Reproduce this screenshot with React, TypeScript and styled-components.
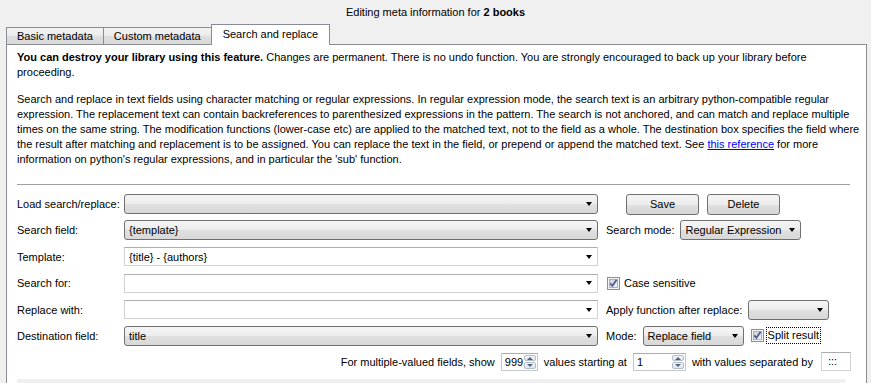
import styled, { createGlobalStyle } from "styled-components";

const GlobalStyle = createGlobalStyle`
    html, body {
        margin: 0;
        padding: 0;
        background: #f0f0f0;
        font-family: "Liberation Sans", Arial, sans-serif;
        font-size: 11px;
        color: #000;
        overflow: hidden;
    }
`;

const Window = styled.div`
    width: 871px;
    height: 383px;
    overflow: hidden;
`;

const Title = styled.div`
    height: 25px;
    line-height: 25px;
    text-align: center;
`;

const TabBar = styled.div`
    display: flex;
    align-items: flex-end;
    height: 19px;
    padding-left: 6px;
    position: relative;
    z-index: 1;
`;

const Tab = styled.div<{ $active?: boolean }>`
    box-sizing: border-box;
    border: 1px solid #898c95;
    border-bottom: none;
    height: ${(p) => (p.$active ? "21px" : "17px")};
    line-height: ${(p) => (p.$active ? "19px" : "16px")};
    margin-bottom: ${(p) => (p.$active ? "-1px" : "0")};
    padding: ${(p) => (p.$active ? "0 11px" : "0 10px")};
    background: ${(p) =>
        p.$active ? "#fff" : "linear-gradient(#f3f3f3, #ebebeb 50%, #dedede 51%, #d9d9d9)"};
    & + & {
        margin-left: ${(p) => (p.$active ? "-1px" : "0")};
    }
`;

const Pane = styled.div`
    margin: 0 4px 0 6px;
    border: 1px solid #898c95;
    background: #fff;
    padding: 5px 15px 0 10px;
    height: 400px;
`;

const Para = styled.p<{ $gap?: number }>`
    margin: 0 0 ${(p) => p.$gap ?? 0}px;
    line-height: 15px;
    white-space: nowrap;
`;

const Link = styled.a`
    color: #0000ff;
    text-decoration: underline;
`;

const Separator = styled.div`
    border-top: 1px solid #a0a0a0;
    margin: 17px 1px 9px 0;
`;

const Form = styled.div`
    display: flex;
    flex-direction: column;
    gap: 6.4px;
`;

const Row = styled.div`
    display: flex;
    align-items: center;
    height: 20px;
`;

const Label = styled.span`
    width: 107px;
    flex-shrink: 0;
`;

const Text = styled.span<{ $ml?: number }>`
    margin-left: ${(p) => p.$ml ?? 0}px;
    white-space: nowrap;
`;

const Combo = styled.div<{ $edit?: boolean; $width: number; $ml?: number }>`
    box-sizing: border-box;
    position: relative;
    width: ${(p) => p.$width}px;
    height: ${(p) => (p.$edit ? "19px" : "20px")};
    margin-left: ${(p) => p.$ml ?? 0}px;
    padding-left: 4px;
    display: flex;
    align-items: center;
    white-space: nowrap;
    border: 1px solid ${(p) => (p.$edit ? "#d0d2d8" : "#707070")};
    border-top-color: ${(p) => (p.$edit ? "#abadb3" : "#707070")};
    border-radius: ${(p) => (p.$edit ? "0" : "3px")};
    background: ${(p) =>
        p.$edit ? "#fff" : "linear-gradient(#f5f5f5, #ececec 50%, #e0e0e0 51%, #d8d8d8)"};
    flex-shrink: 0;

    &::after {
        content: "";
        position: absolute;
        right: 5px;
        top: 50%;
        margin-top: -2px;
        border-left: 3.5px solid transparent;
        border-right: 3.5px solid transparent;
        border-top: 4px solid #000;
    }
`;

const Button = styled.button<{ $ml?: number }>`
    box-sizing: border-box;
    width: 73px;
    height: 21px;
    margin-left: ${(p) => p.$ml ?? 0}px;
    border: 1px solid #707070;
    border-radius: 3px;
    background: linear-gradient(#f5f5f5, #ececec 50%, #e0e0e0 51%, #d6d6d6);
    font: inherit;
    color: #000;
    padding: 0;
`;

const CheckWrap = styled.span<{ $ml?: number }>`
    display: inline-flex;
    margin-left: ${(p) => p.$ml ?? 0}px;
    flex-shrink: 0;
`;

const FocusLabel = styled.span`
    margin-left: 2px;
    padding: 1px 1px 2px 1px;
    border: 1px dotted #000;
    white-space: nowrap;
`;

const BottomRow = styled.div`
    display: flex;
    align-items: center;
    justify-content: flex-end;
    height: 20px;
    gap: 6px;
    margin-top: 6px;
`;

const Spin = styled.div<{ $width: number }>`
    box-sizing: border-box;
    width: ${(p) => p.$width}px;
    height: 18px;
    border: 1px solid #c5c8ce;
    border-top-color: #abadb3;
    background: #fff;
    display: flex;
    align-items: stretch;
    padding: 1px;
`;

const SpinValue = styled.span`
    flex: 1;
    padding-left: 2px;
    line-height: 14px;
`;

const SpinButtons = styled.div`
    width: 12px;
    display: flex;
    flex-direction: column;
    gap: 1px;
`;

const SpinButton = styled.div<{ $up?: boolean }>`
    flex: 1;
    border: 1px solid #b4bcc8;
    border-radius: 2px;
    background: linear-gradient(#f4f6f9, #dfe5ec);
    display: flex;
    align-items: center;
    justify-content: center;

    &::before {
        content: "";
        border-left: 3px solid transparent;
        border-right: 3px solid transparent;
        ${(p) => (p.$up ? "border-bottom: 3px solid #4d6185;" : "border-top: 3px solid #4d6185;")}
    }
`;

const SepBox = styled.div`
    box-sizing: border-box;
    width: 30px;
    height: 19px;
    border: 1px solid #d0d2d8;
    border-top-color: #abadb3;
    background: #fff;
    padding-left: 6px;
    line-height: 17px;
    margin-left: 2px;
`;

const Preview = styled.div`
    height: 20px;
    background: #f0f0f0;
    margin: 7px 6px 0 0;
`;

function CheckBox({ ml }: { ml?: number }) {
    return (
        <CheckWrap $ml={ml}>
            <svg width="13" height="13" viewBox="0 0 13 13">
                <defs>
                    <linearGradient id="cbg" x1="0" y1="0" x2="1" y2="1">
                        <stop offset="0" stopColor="#cbcfd5" />
                        <stop offset="1" stopColor="#f6f6f6" />
                    </linearGradient>
                </defs>
                <rect x="0.5" y="0.5" width="12" height="12" fill="#f4f4f4" stroke="#8e8f8f" />
                <rect x="2.5" y="2.5" width="8" height="8" fill="url(#cbg)" stroke="#aeb3b9" />
                <path d="M3.2 6.4 L5.4 8.8 L9.6 2.8" fill="none" stroke="#4a5f97" strokeWidth="1.8" />
            </svg>
        </CheckWrap>
    );
}

function SpinBox({ value, width }: { value: string; width: number }) {
    return (
        <Spin $width={width}>
            <SpinValue>{value}</SpinValue>
            <SpinButtons>
                <SpinButton $up />
                <SpinButton />
            </SpinButtons>
        </Spin>
    );
}

export default function App() {
    return (
        <Window>
            <GlobalStyle />
            <Title>
                Editing meta information for <b>2 books</b>
            </Title>
            <TabBar>
                <Tab>Basic metadata</Tab>
                <Tab>Custom metadata</Tab>
                <Tab $active>Search and replace</Tab>
            </TabBar>
            <Pane>
                <Para $gap={12}>
                    <b>You can destroy your library using this feature.</b> Changes are permanent. There is no
                    undo function. You are strongly encouraged to back up your library before
                    <br />
                    proceeding.
                </Para>
                <Para>
                    Search and replace in text fields using character matching or regular expressions. In regular
                    expression mode, the search text is an arbitrary python-compatible regular
                    <br />
                    expression. The replacement text can contain backreferences to parenthesized expressions in the
                    pattern. The search is not anchored, and can match and replace multiple
                    <br />
                    times on the same string. The modification functions (lower-case etc) are applied to the matched
                    text, not to the field as a whole. The destination box specifies the field where
                    <br />
                    the result after matching and replacement is to be assigned. You can replace the text in the
                    field, or prepend or append the matched text. See <Link href="#">this reference</Link> for more
                    <br />
                    information on python's regular expressions, and in particular the 'sub' function.
                </Para>
                <Separator />
                <Form>
                    <Row>
                        <Label>Load search/replace:</Label>
                        <Combo $width={474} />
                        <Button $ml={28}>Save</Button>
                        <Button $ml={8}>Delete</Button>
                    </Row>
                    <Row>
                        <Label>Search field:</Label>
                        <Combo $width={474}>{"{template}"}</Combo>
                        <Text $ml={8}>Search mode:</Text>
                        <Combo $width={121} $ml={6}>Regular Expression</Combo>
                    </Row>
                    <Row>
                        <Label>Template:</Label>
                        <Combo $edit $width={474}>{"{title} - {authors}"}</Combo>
                    </Row>
                    <Row>
                        <Label>Search for:</Label>
                        <Combo $edit $width={474} />
                        <CheckBox ml={9} />
                        <Text $ml={4}>Case sensitive</Text>
                    </Row>
                    <Row>
                        <Label>Replace with:</Label>
                        <Combo $edit $width={474} />
                        <Text $ml={8}>Apply function after replace:</Text>
                        <Combo $width={81} $ml={6} />
                    </Row>
                    <Row>
                        <Label>Destination field:</Label>
                        <Combo $width={474}>title</Combo>
                        <Text $ml={8}>Mode:</Text>
                        <Combo $width={101} $ml={6}>Replace field</Combo>
                        <CheckBox ml={7} />
                        <FocusLabel>Split result</FocusLabel>
                    </Row>
                </Form>
                <BottomRow>
                    <Text>For multiple-valued fields, show</Text>
                    <SpinBox value="999" width={37} />
                    <Text>values starting at</Text>
                    <SpinBox value="1" width={53} />
                    <Text>with values separated by</Text>
                    <SepBox>:::</SepBox>
                </BottomRow>
                <Preview />
            </Pane>
        </Window>
    );
}
